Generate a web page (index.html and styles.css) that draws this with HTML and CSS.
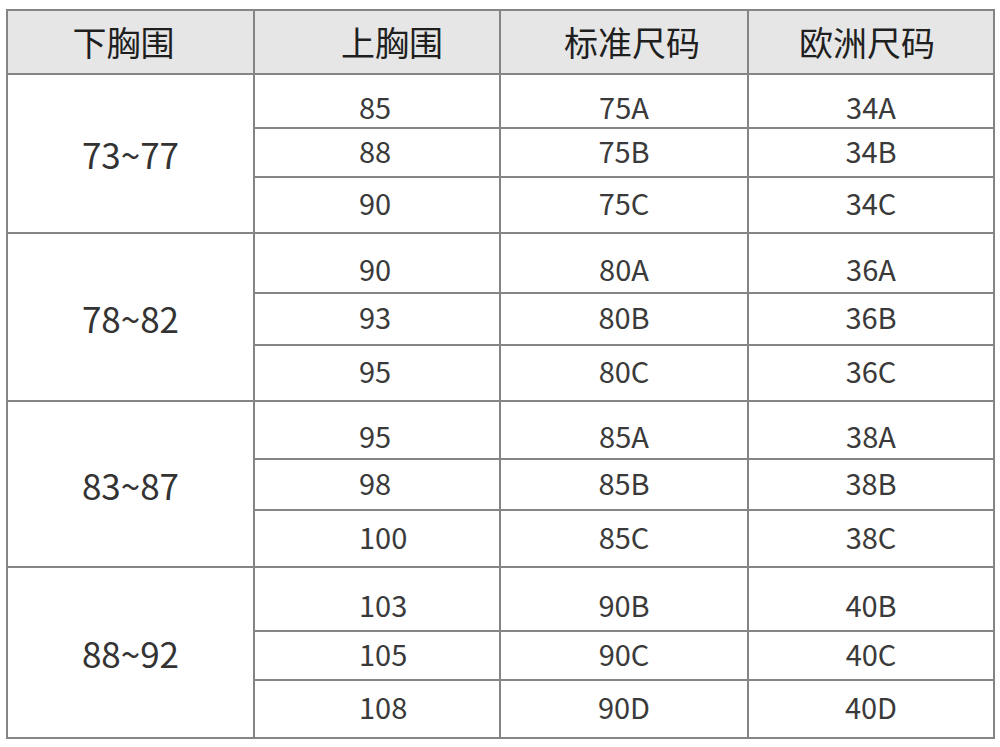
FILE: index.html
```html
<!DOCTYPE html>
<html lang="zh">
<head>
<meta charset="utf-8">
<title>尺码表</title>
<link rel="stylesheet" href="styles.css">
</head>
<body>
<div class="page">
  <div class="chart">
    <div class="cell head h1">下胸围</div>
    <div class="cell head h2">上胸围</div>
    <div class="cell head h3">标准尺码</div>
    <div class="cell head h4">欧洲尺码</div>

    <div class="cell range">73~77</div>
    <div class="cell upper first">85</div>
    <div class="cell size first">75A</div>
    <div class="cell size first">34A</div>
    <div class="cell upper">88</div>
    <div class="cell size">75B</div>
    <div class="cell size">34B</div>
    <div class="cell upper">90</div>
    <div class="cell size">75C</div>
    <div class="cell size">34C</div>

    <div class="cell range">78~82</div>
    <div class="cell upper first">90</div>
    <div class="cell size first">80A</div>
    <div class="cell size first">36A</div>
    <div class="cell upper">93</div>
    <div class="cell size">80B</div>
    <div class="cell size">36B</div>
    <div class="cell upper">95</div>
    <div class="cell size">80C</div>
    <div class="cell size">36C</div>

    <div class="cell range">83~87</div>
    <div class="cell upper first">95</div>
    <div class="cell size first">85A</div>
    <div class="cell size first">38A</div>
    <div class="cell upper">98</div>
    <div class="cell size">85B</div>
    <div class="cell size">38B</div>
    <div class="cell upper">100</div>
    <div class="cell size">85C</div>
    <div class="cell size">38C</div>

    <div class="cell range">88~92</div>
    <div class="cell upper first">103</div>
    <div class="cell size first">90B</div>
    <div class="cell size first">40B</div>
    <div class="cell upper">105</div>
    <div class="cell size">90C</div>
    <div class="cell size">40C</div>
    <div class="cell upper">108</div>
    <div class="cell size">90D</div>
    <div class="cell size">40D</div>
  </div>
</div>
</body>
</html>
```

FILE: styles.css
```css
html, body {
  margin: 0;
  padding: 0;
  background: #ffffff;
}

body {
  font-family: "Noto Sans CJK SC", "Noto Sans", sans-serif;
  color: #3a3a3a;
}

.page {
  padding: 9px 0 0 6px;
}

.chart {
  display: grid;
  grid-template-columns: 245px 244px 246px 244px;
  grid-template-rows: 62px 52px 47px 54px 58px 50px 54px 56px 49px 55px 62px 47px 56px;
  gap: 2px;
  padding: 2px;
  width: max-content;
  background: #858585;
}

.cell {
  background: #ffffff;
  display: flex;
  align-items: center;
  justify-content: center;
  box-sizing: border-box;
  font-size: 29px;
  line-height: 1;
  padding-bottom: 5px;
}

.head {
  background: #e6e6e6;
  color: #1f1f1f;
  font-size: 34px;
  padding-bottom: 0;
}

.h1 { padding-right: 14px; }
.h2 { padding-left: 30px; }
.h3 { padding-left: 16px; }
.h4 { padding-right: 8px; }

.range {
  grid-row: span 3;
  font-size: 35px;
  color: #333333;
  padding-bottom: 0;
}

.upper {
  justify-content: flex-start;
  padding-left: 104px;
}

.first {
  padding-top: 16px;
}
```
